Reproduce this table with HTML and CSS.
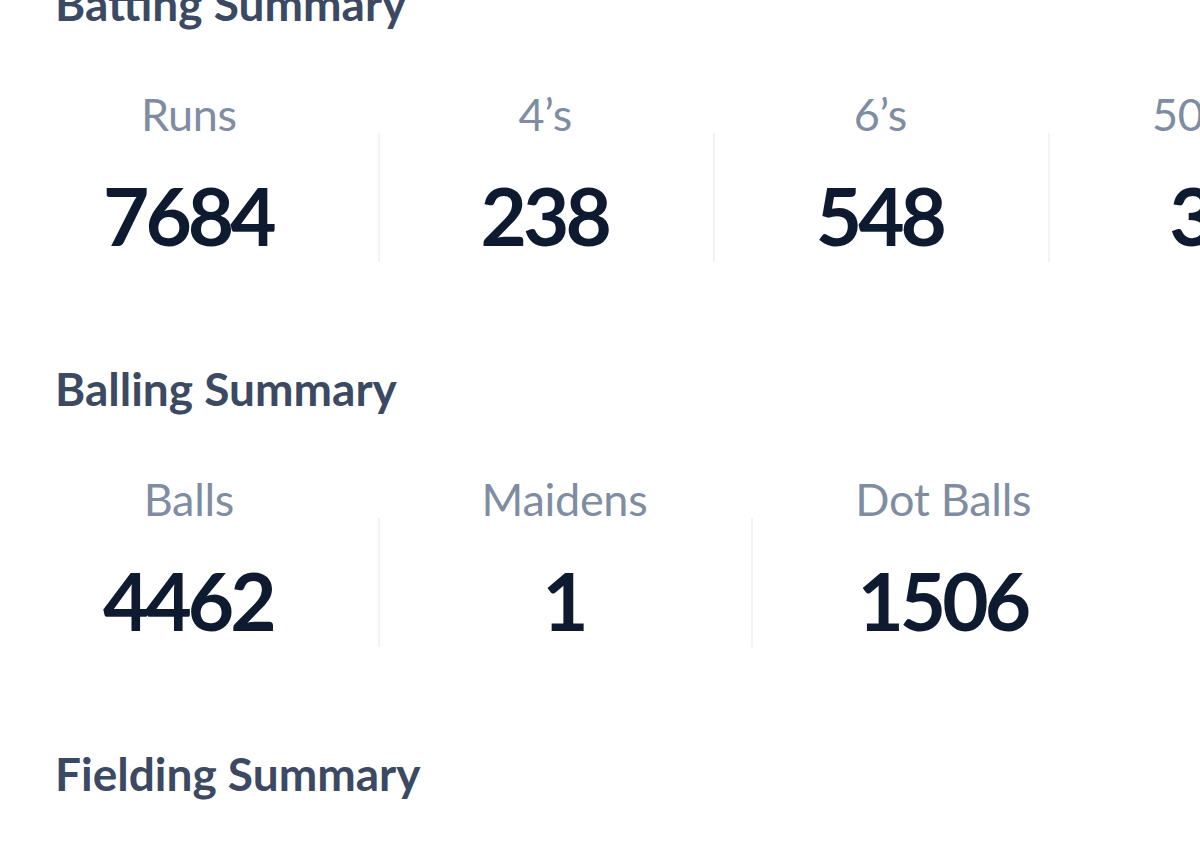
FILE: index.html
```html
<!DOCTYPE html>
<html lang="en">
<head>
<meta charset="utf-8">
<title>Player Summary</title>
<link rel="stylesheet" href="styles.css">
</head>
<body>
<main class="page">
  <section class="summary">
    <h2 class="summary-title">Batting Summary</h2>
    <div class="stats">
      <div class="stat">
        <div class="stat-label">Runs</div>
        <div class="stat-value">7684</div>
      </div>
      <div class="stat">
        <div class="stat-label">4’s</div>
        <div class="stat-value">238</div>
      </div>
      <div class="stat">
        <div class="stat-label">6’s</div>
        <div class="stat-value">548</div>
      </div>
      <div class="stat">
        <div class="stat-label">50’s</div>
        <div class="stat-value">3</div>
      </div>
    </div>
  </section>
  <section class="summary">
    <h2 class="summary-title">Balling Summary</h2>
    <div class="stats">
      <div class="stat">
        <div class="stat-label">Balls</div>
        <div class="stat-value">4462</div>
      </div>
      <div class="stat">
        <div class="stat-label">Maidens</div>
        <div class="stat-value">1</div>
      </div>
      <div class="stat">
        <div class="stat-label">Dot Balls</div>
        <div class="stat-value">1506</div>
      </div>
    </div>
  </section>
  <section class="summary">
    <h2 class="summary-title">Fielding Summary</h2>
  </section>
</main>
</body>
</html>
```

FILE: styles.css
```css
html, body {
  margin: 0;
  padding: 0;
  background: #ffffff;
}

body {
  font-family: "Lato", "Noto Sans", sans-serif;
  overflow: hidden;
}

.page {
  margin-top: -24px;
  display: flex;
  flex-direction: column;
}

.summary {
  display: flex;
  flex-direction: column;
  margin-bottom: 99px;
}

.summary-title {
  margin: 0 0 63px 55px;
  font-size: 46px;
  line-height: 56px;
  font-weight: 700;
  color: #3b4a62;
  white-space: nowrap;
}

.stats {
  display: flex;
  flex-direction: row;
  overflow: hidden;
}

.stat {
  flex: 0 0 auto;
  display: flex;
  flex-direction: column;
  align-items: stretch;
  text-align: center;
  white-space: nowrap;
}

.stat-label {
  padding: 0 104px;
  font-size: 45px;
  line-height: 38px;
  font-weight: 400;
  letter-spacing: -0.3px;
  color: #7f8da2;
}

.stat-value {
  padding: 36px 105px 0 101px;
  font-size: 80px;
  line-height: 93px;
  font-weight: 700;
  letter-spacing: -4px;
  color: #0e1a30;
  border-left: 2px solid #f1f3f6;
}

.stat:first-child .stat-value {
  border-left-color: transparent;
}
```
